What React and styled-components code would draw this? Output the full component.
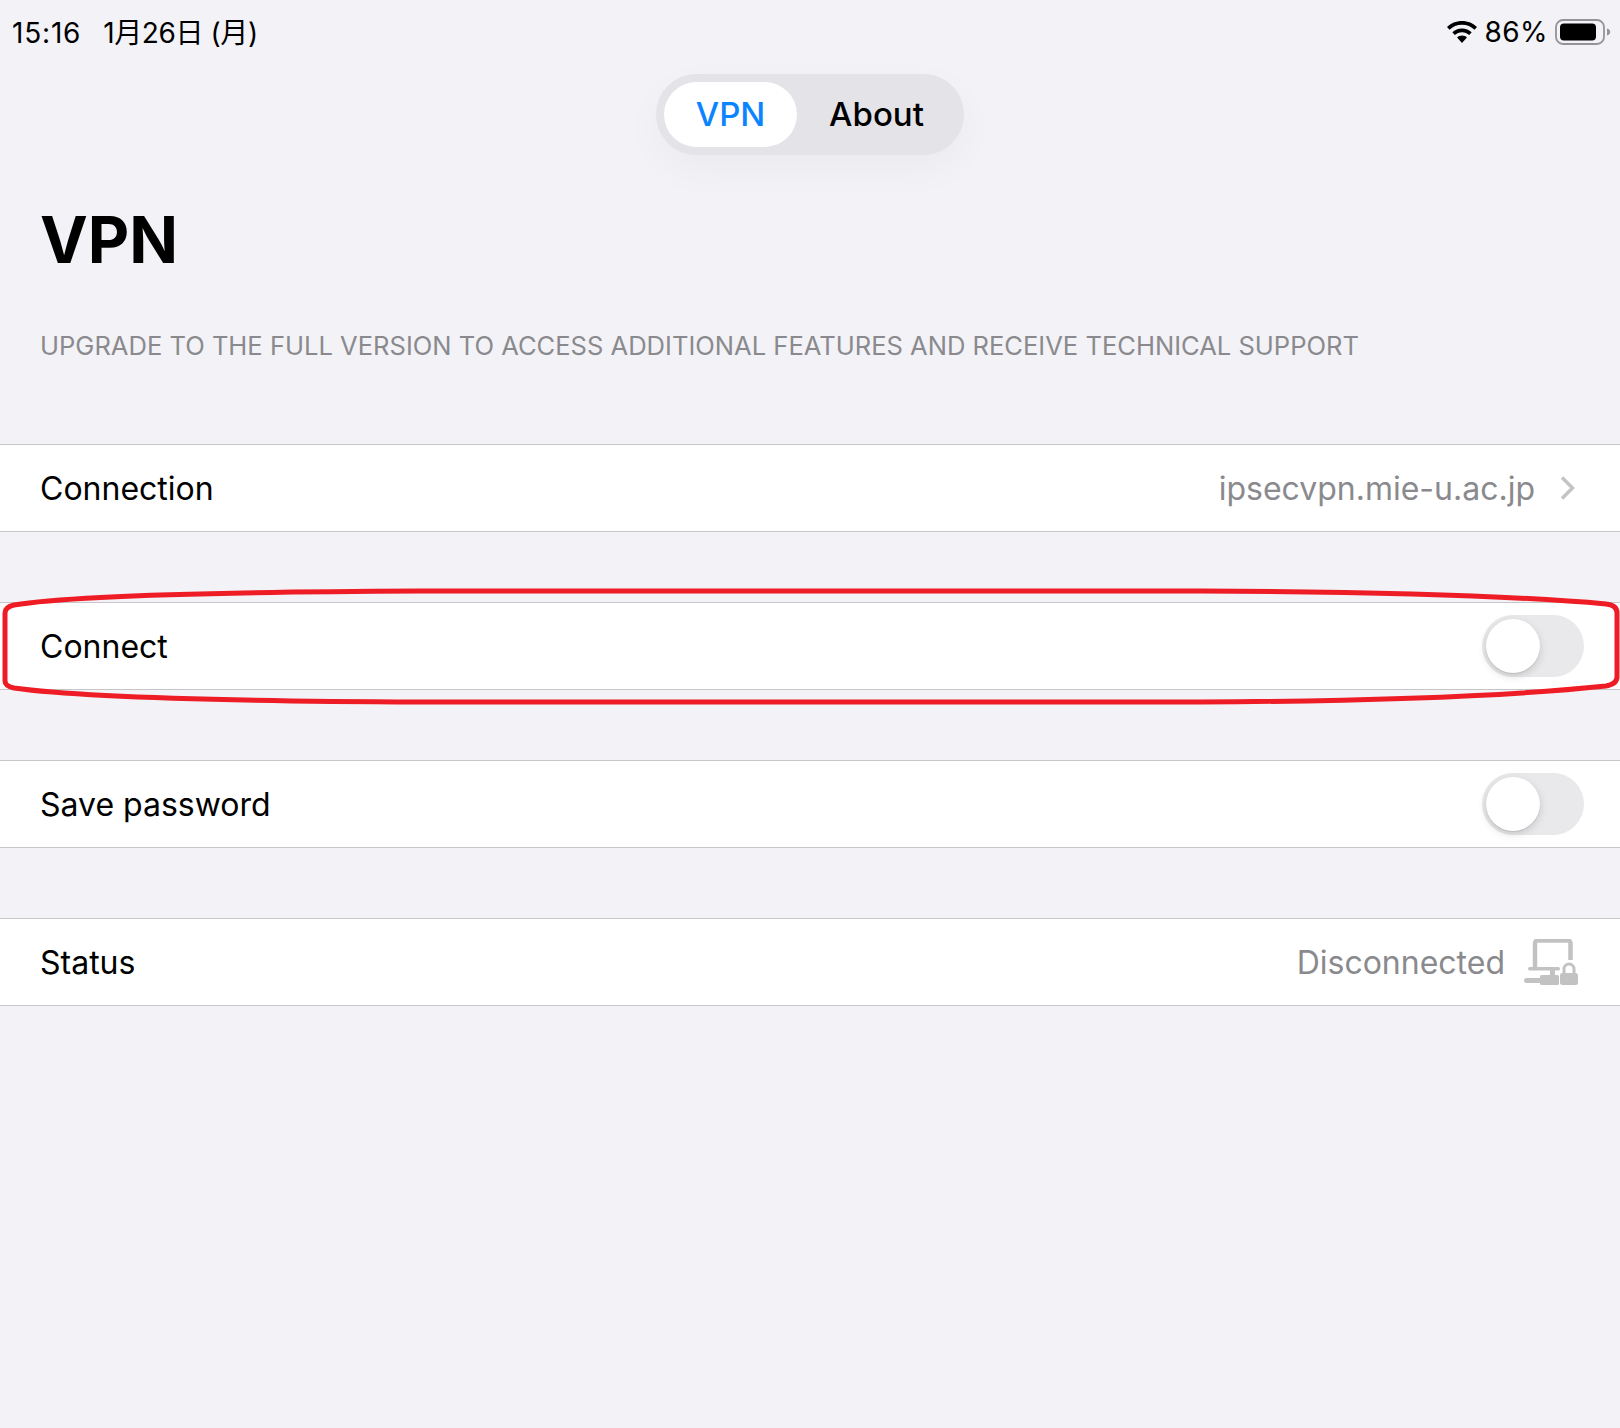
import React from 'react';
import styled, { createGlobalStyle } from 'styled-components';

const GlobalStyle = createGlobalStyle`
  html, body {
    margin: 0;
    padding: 0;
    background: #f2f2f7;
  }
  body {
    font-family: Inter, "Noto Sans CJK JP", "Liberation Sans", sans-serif;
    color: #000;
  }
`;

const Page = styled.div`
  width: 1620px;
  height: 1428px;
  background: #f2f2f7;
  overflow: hidden;
`;

const StatusBar = styled.div`
  height: 64px;
  padding: 0 9px 0 12px;
  display: flex;
  align-items: center;
  justify-content: space-between;
  font-size: 28px;
  box-sizing: border-box;
`;

const StatusLeft = styled.div`
  display: flex;
  align-items: baseline;
  gap: 22px;
  padding-bottom: 2px;
`;

const Clock = styled.span`
  letter-spacing: 0.8px;
`;

const DateText = styled.span`
  letter-spacing: -0.4px;
`;

const StatusRight = styled.div`
  display: flex;
  align-items: center;
  gap: 7px;
  letter-spacing: 0.4px;
`;

const TabsRow = styled.div`
  display: flex;
  justify-content: center;
  margin-top: 10px;
`;

const Tabs = styled.div`
  width: 308px;
  height: 81px;
  padding: 8px;
  box-sizing: border-box;
  border-radius: 41px;
  background: #e3e3e8;
  box-shadow: 0 14px 40px rgba(0, 0, 0, 0.035);
  display: flex;
`;

const Tab = styled.div`
  width: ${p => (p.$active ? '133px' : '159px')};
  padding-bottom: 2px;
  box-sizing: border-box;
  border-radius: 33px;
  display: flex;
  align-items: center;
  justify-content: center;
  font-size: 33px;
  font-weight: 450;
  background: ${p => (p.$active ? '#fff' : 'transparent')};
  color: ${p => (p.$active ? '#0a84ff' : '#000')};
`;

const Title = styled.h1`
  margin: 44px 0 0;
  padding-left: 40px;
  font-size: 64px;
  line-height: 82px;
  font-weight: 700;
`;

const Notice = styled.div`
  margin-top: 49px;
  padding-left: 40px;
  font-size: 25.56px;
  line-height: 32px;
  color: #8a8a8e;
  white-space: nowrap;
`;

const Rows = styled.div`
  margin-top: 82px;
  display: flex;
  flex-direction: column;
  gap: 70px;
`;

const Row = styled.div`
  position: relative;
  height: 88px;
  box-sizing: border-box;
  padding: 0 36px 0 40px;
  background: #fff;
  border-top: 1px solid #c6c6c8;
  border-bottom: 1px solid #c6c6c8;
  display: flex;
  align-items: center;
  justify-content: space-between;
  font-size: 32px;
`;

const Value = styled.div`
  display: flex;
  align-items: center;
  color: #8a8a8e;
`;

const Chevron = styled.svg`
  width: 15px;
  height: 24px;
  margin-left: 25px;
  margin-right: 9px;
`;

const StatusIcon = styled.svg`
  width: 54px;
  height: 46px;
  margin-left: 19px;
  margin-right: 6px;
`;

const Toggle = styled.div`
  position: relative;
  width: 102px;
  height: 62px;
  border-radius: 31px;
  background: #e9e9eb;
`;

const Knob = styled.div`
  position: absolute;
  left: 4px;
  top: 4px;
  width: 54px;
  height: 54px;
  border-radius: 50%;
  background: #fff;
  box-shadow: 0 3px 8px rgba(0, 0, 0, 0.15), 0 1px 1px rgba(0, 0, 0, 0.1);
`;

const Annotation = styled.svg`
  position: absolute;
  left: 0;
  top: -14px;
  width: 1620px;
  height: 116px;
  overflow: visible;
  pointer-events: none;
`;

const WifiIcon = () => (
  <svg width="32" height="22" viewBox="0 0 32 22">
    <path d="M16 0C10 0 4.800 2.300 1 6l2.500 2.800C6.700 5.700 11.100 3.800 16 3.800s9.300 1.900 12.500 5L31 6C27.200 2.300 22 0 16 0z" fill="#000" />
    <path d="M16 7.400c-3.800 0-7.200 1.500-9.700 3.900l2.500 2.800c1.900-1.800 4.400-2.900 7.200-2.900s5.300 1.100 7.200 2.900l2.500-2.800c-2.500-2.400-5.900-3.900-9.700-3.900z" fill="#000" />
    <path d="M16 14.600c-1.900 0-3.600.7-4.900 1.900l4.900 5.500 4.900-5.500c-1.300-1.200-3-1.900-4.900-1.900z" fill="#000" />
  </svg>
);

const BatteryIcon = () => (
  <svg width="56" height="26" viewBox="0 0 56 26">
    <rect x="1" y="1" width="48" height="24" rx="7" fill="none" stroke="#949497" strokeWidth="1.800" />
    <rect x="5" y="4.500" width="36" height="17" rx="4" fill="#000" />
    <path d="M52 9.500c2 .6 3.200 1.900 3.200 3.500s-1.200 2.900-3.200 3.500z" fill="#949497" />
  </svg>
);

const App = () => (
  <Page>
    <GlobalStyle />
    <StatusBar>
      <StatusLeft>
        <Clock>15:16</Clock>
        <DateText>1月26日 (月)</DateText>
      </StatusLeft>
      <StatusRight>
        <WifiIcon />
        <span>86%</span>
        <BatteryIcon />
      </StatusRight>
    </StatusBar>
    <TabsRow>
      <Tabs>
        <Tab $active>VPN</Tab>
        <Tab>About</Tab>
      </Tabs>
    </TabsRow>
    <Title>VPN</Title>
    <Notice>UPGRADE TO THE FULL VERSION TO ACCESS ADDITIONAL FEATURES AND RECEIVE TECHNICAL SUPPORT</Notice>
    <Rows>
      <Row>
        <span>Connection</span>
        <Value>
          ipsecvpn.mie-u.ac.jp
          <Chevron viewBox="0 0 15 24">
            <path d="M2 1.500L12.500 12 2 22.500" fill="none" stroke="#c4c4c7" strokeWidth="3.500" />
          </Chevron>
        </Value>
      </Row>
      <Row>
        <span>Connect</span>
        <Toggle>
          <Knob />
        </Toggle>
        <Annotation viewBox="0 0 1620 116">
          <path
            d="M5 24Q5 18 14 16C60 8 200 3 420 2L1200 2C1400 3 1530 8 1606 15Q1617 16 1617 24L1617 88Q1617 95 1606 97C1530 105 1400 112 1200 113L420 113C220 112 70 107 14 99Q5 97 5 92Z"
            fill="none"
            stroke="#ee1c25"
            strokeWidth="5"
          />
        </Annotation>
      </Row>
      <Row>
        <span>Save password</span>
        <Toggle>
          <Knob />
        </Toggle>
      </Row>
      <Row>
        <span>Status</span>
        <Value>
          Disconnected
          <StatusIcon viewBox="0 0 54 46">
            <path d="M11 28V4a2.500 2.500 0 0 1 2.500-2.500H44A2.500 2.500 0 0 1 46.500 4v17" fill="none" stroke="#c2c2c2" strokeWidth="4.500" />
            <rect x="4" y="28" width="32" height="3.500" rx="1.700" fill="#c2c2c2" />
            <rect x="26" y="31" width="5" height="6" fill="#c2c2c2" />
            <rect x="0" y="39" width="18" height="5" rx="2.500" fill="#c2c2c2" />
            <rect x="16" y="36" width="19" height="10" rx="1.500" fill="#c2c2c2" />
            <path d="M40 35v-5a5 5 0 0 1 10 0v5" fill="none" stroke="#c2c2c2" strokeWidth="3" />
            <rect x="36" y="34" width="18" height="12" rx="2.500" fill="#c2c2c2" />
          </StatusIcon>
        </Value>
      </Row>
    </Rows>
  </Page>
);

export default App;
